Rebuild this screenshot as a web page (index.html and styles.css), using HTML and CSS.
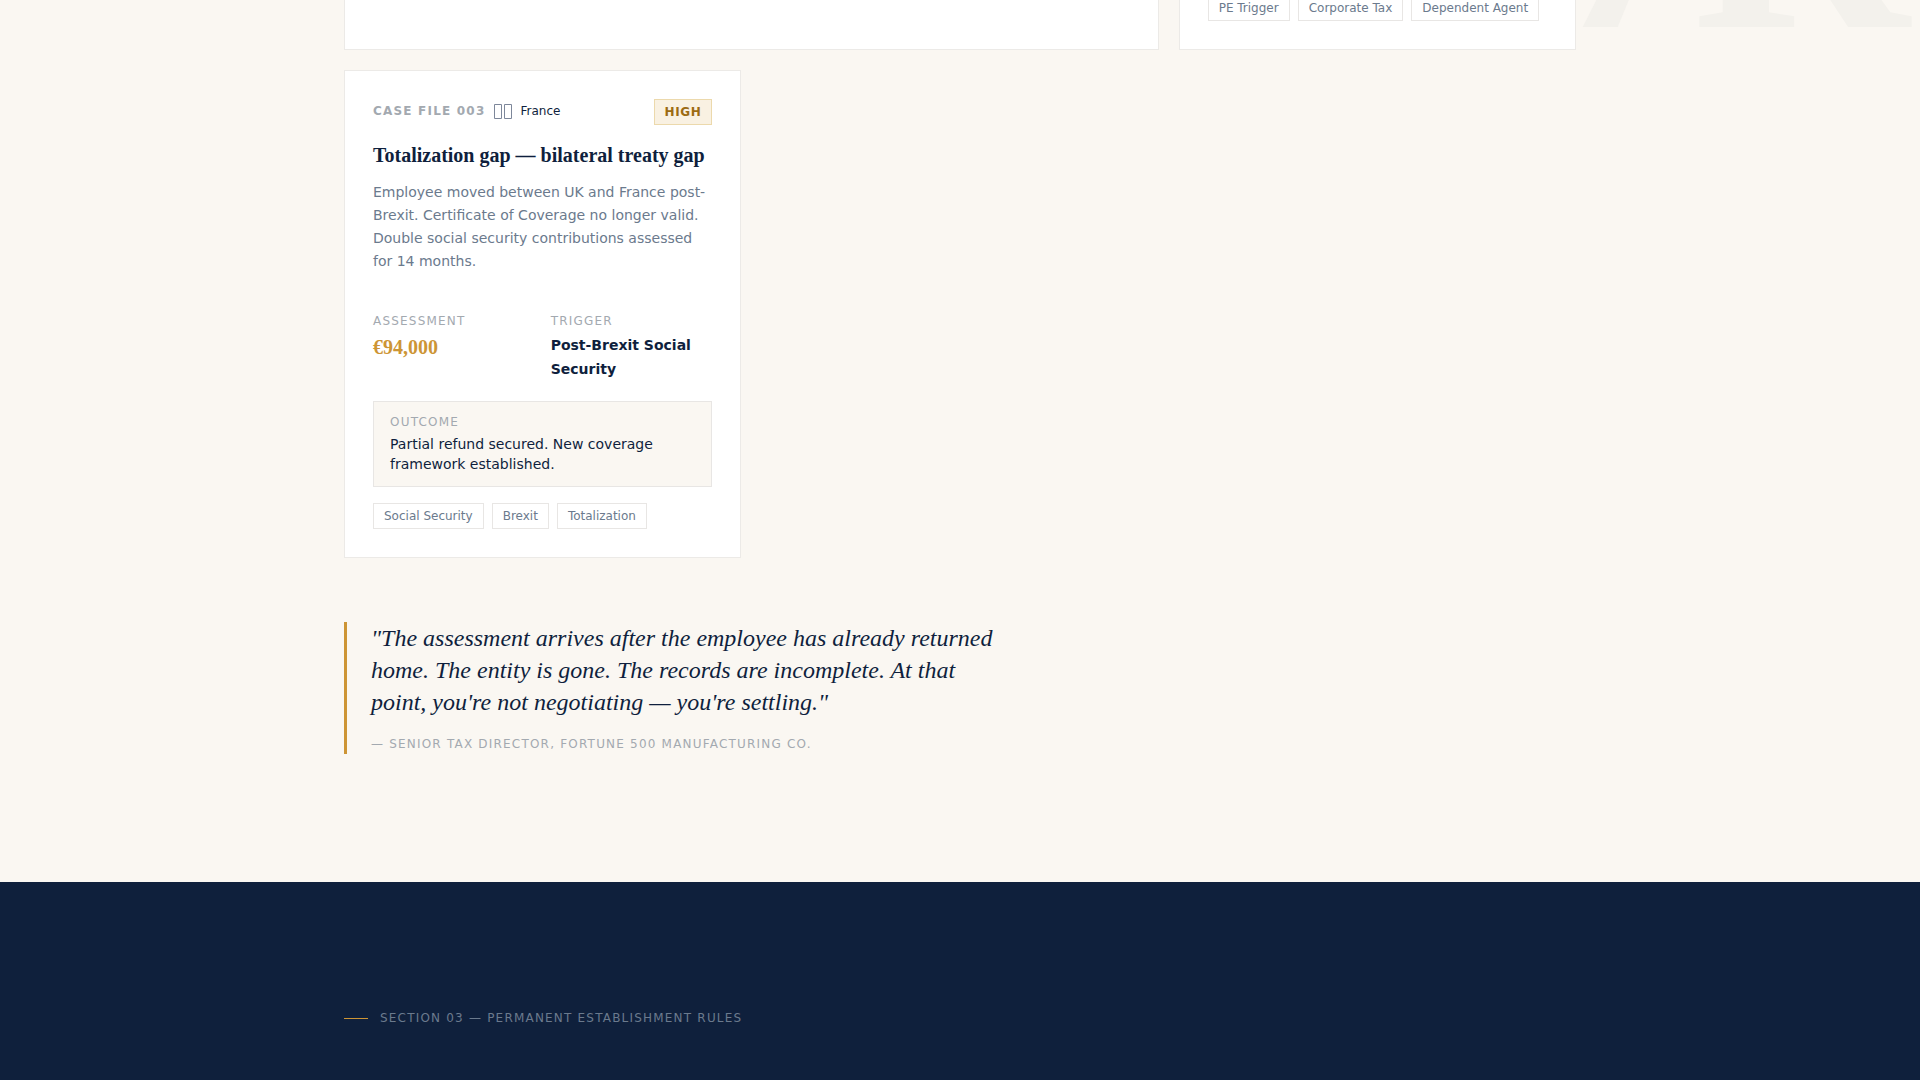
FILE: index.html
```
<!DOCTYPE html>
<html lang="en">
<head>
<meta charset="utf-8">
<meta name="viewport" content="width=device-width, initial-scale=1">
<title>Case files</title>
<link rel="stylesheet" href="styles.css">
</head>
<body>
<section class="cases">
  <div class="watermark" aria-hidden="true">7R</div>
  <div class="container">
    <div class="case-grid">
      <article class="card card-wide card-cut"></article>
      <article class="card card-cut">
        <ul class="tags">
          <li class="tag">PE Trigger</li>
          <li class="tag">Corporate Tax</li>
          <li class="tag">Dependent Agent</li>
        </ul>
      </article>
      <article class="card">
        <header class="card-head">
          <div class="card-meta">
            <span class="case-number">CASE FILE 003</span>
            <svg class="flag" width="19" height="16" viewBox="0 0 19 16" aria-hidden="true">
              <path d="M1.5 1.5h7v14h-7zM11.5 1.5h7v14h-7z"/>
            </svg>
            <span class="country">France</span>
          </div>
          <span class="badge">HIGH</span>
        </header>
        <h3 class="card-title">Totalization gap — bilateral treaty gap</h3>
        <p class="card-text">Employee moved between UK and France post-Brexit. Certificate of Coverage no longer valid. Double social security contributions assessed for 14 months.</p>
        <dl class="facts">
          <div>
            <dt class="label">ASSESSMENT</dt>
            <dd class="amount">€94,000</dd>
          </div>
          <div>
            <dt class="label">TRIGGER</dt>
            <dd class="trigger">Post-Brexit Social Security</dd>
          </div>
        </dl>
        <div class="outcome">
          <div class="label">OUTCOME</div>
          <p class="outcome-text">Partial refund secured. New coverage framework established.</p>
        </div>
        <ul class="tags">
          <li class="tag">Social Security</li>
          <li class="tag">Brexit</li>
          <li class="tag">Totalization</li>
        </ul>
      </article>
    </div>
    <figure class="quote">
      <blockquote class="quote-text">"The assessment arrives after the employee has already returned home. The entity is gone. The records are incomplete. At that point, you're not negotiating — you're settling."</blockquote>
      <figcaption class="quote-source">— SENIOR TAX DIRECTOR, FORTUNE 500 MANUFACTURING CO.</figcaption>
    </figure>
  </div>
</section>
<section class="rules">
  <div class="container">
    <h2 class="section-label">SECTION 03 — PERMANENT ESTABLISHMENT RULES</h2>
  </div>
</section>
</body>
</html>
```
FILE: styles.css
```
:root {
  --ink: #0f1f3d;
  --navy: #0f203c;
  --cream: #faf7f2;
  --gold: #cd9535;
  --line: #e8e6e4;
  --slate: #6b7a8d;
  --mute: #a3a9b0;
  --serif: "Liberation Serif", serif;
}

* {
  box-sizing: border-box;
  margin: 0;
  padding: 0;
}

body {
  background: var(--navy);
  color: var(--ink);
  font: 14px/24px "DejaVu Sans", sans-serif;
}

ul {
  list-style: none;
}

.container {
  position: relative;
  max-width: 1280px;
  margin: 0 auto;
  padding: 0 24px;
}

.cases {
  position: relative;
  overflow: hidden;
  padding-bottom: 128px;
  background: var(--cream);
}

.watermark {
  position: absolute;
  top: -224px;
  right: 20px;
  color: #f3f1ec;
  font: bold 300px/300px var(--serif);
  letter-spacing: -0.03em;
}

.case-grid {
  display: grid;
  grid-template-columns: repeat(3, 1fr);
  gap: 20px;
}

.card {
  padding: 28px;
  border: 1px solid #eceae7;
  background: #fff;
}

.card-wide {
  grid-column: span 2;
}

/* First row continues above the top of the view */
.card-cut {
  display: flex;
  flex-direction: column;
  justify-content: flex-end;
  height: 50px;
  padding-top: 0;
  overflow: hidden;
  border-top: 0;
}

.card-head {
  display: flex;
  justify-content: space-between;
  align-items: flex-start;
  margin-bottom: 16px;
}

.card-meta {
  display: flex;
  align-items: center;
  gap: 8px;
  font-size: 12px;
}

.case-number {
  color: var(--mute);
  font-weight: bold;
  letter-spacing: 0.1em;
}

.flag {
  fill: none;
  stroke: #7d879a;
}

.badge {
  padding: 2px 10px;
  border: 1px solid #ecd9ac;
  background: #f9f1e2;
  color: #9c6b12;
  font-size: 12px;
  font-weight: bold;
  line-height: 20px;
  letter-spacing: 0.05em;
}

.card-title {
  margin-bottom: 12px;
  font: bold 20px/28px var(--serif);
}

.card-text {
  margin-bottom: 38px;
  color: var(--slate);
  line-height: 23px;
}

.facts {
  display: grid;
  grid-template-columns: 1fr 1fr;
  gap: 16px;
  margin-bottom: 20px;
}

.label {
  color: var(--mute);
  font-size: 12px;
  line-height: 20px;
  letter-spacing: 0.1em;
}

.amount {
  margin-top: 4px;
  color: var(--gold);
  font: bold 20px/24px var(--serif);
}

.trigger {
  margin-top: 2px;
  font-weight: bold;
}

.outcome {
  margin-bottom: 16px;
  padding: 10px 16px 12px;
  border: 1px solid var(--line);
  background: var(--cream);
}

.outcome-text {
  margin-top: 2px;
  line-height: 20px;
}

.tags {
  display: flex;
  gap: 8px;
}

.tag {
  padding: 2px 10px;
  border: 1px solid var(--line);
  color: var(--slate);
  font-size: 12px;
  line-height: 20px;
  white-space: nowrap;
}

.quote {
  max-width: 672px;
  margin-top: 64px;
  padding-left: 24px;
  border-left: 3px solid var(--gold);
}

.quote-text {
  font: italic 24px/32px var(--serif);
}

.quote-source {
  margin-top: 16px;
  color: var(--mute);
  font-size: 12px;
  line-height: 20px;
  letter-spacing: 0.1em;
}

.rules {
  min-height: 198px;
  padding: 126px 0 52px;
  background: var(--navy);
}

.section-label {
  display: flex;
  align-items: center;
  gap: 12px;
  color: var(--slate);
  font-size: 12px;
  font-weight: normal;
  line-height: 20px;
  letter-spacing: 0.1em;
}

.section-label::before {
  width: 24px;
  height: 1px;
  background: var(--gold);
  content: "";
}
```
